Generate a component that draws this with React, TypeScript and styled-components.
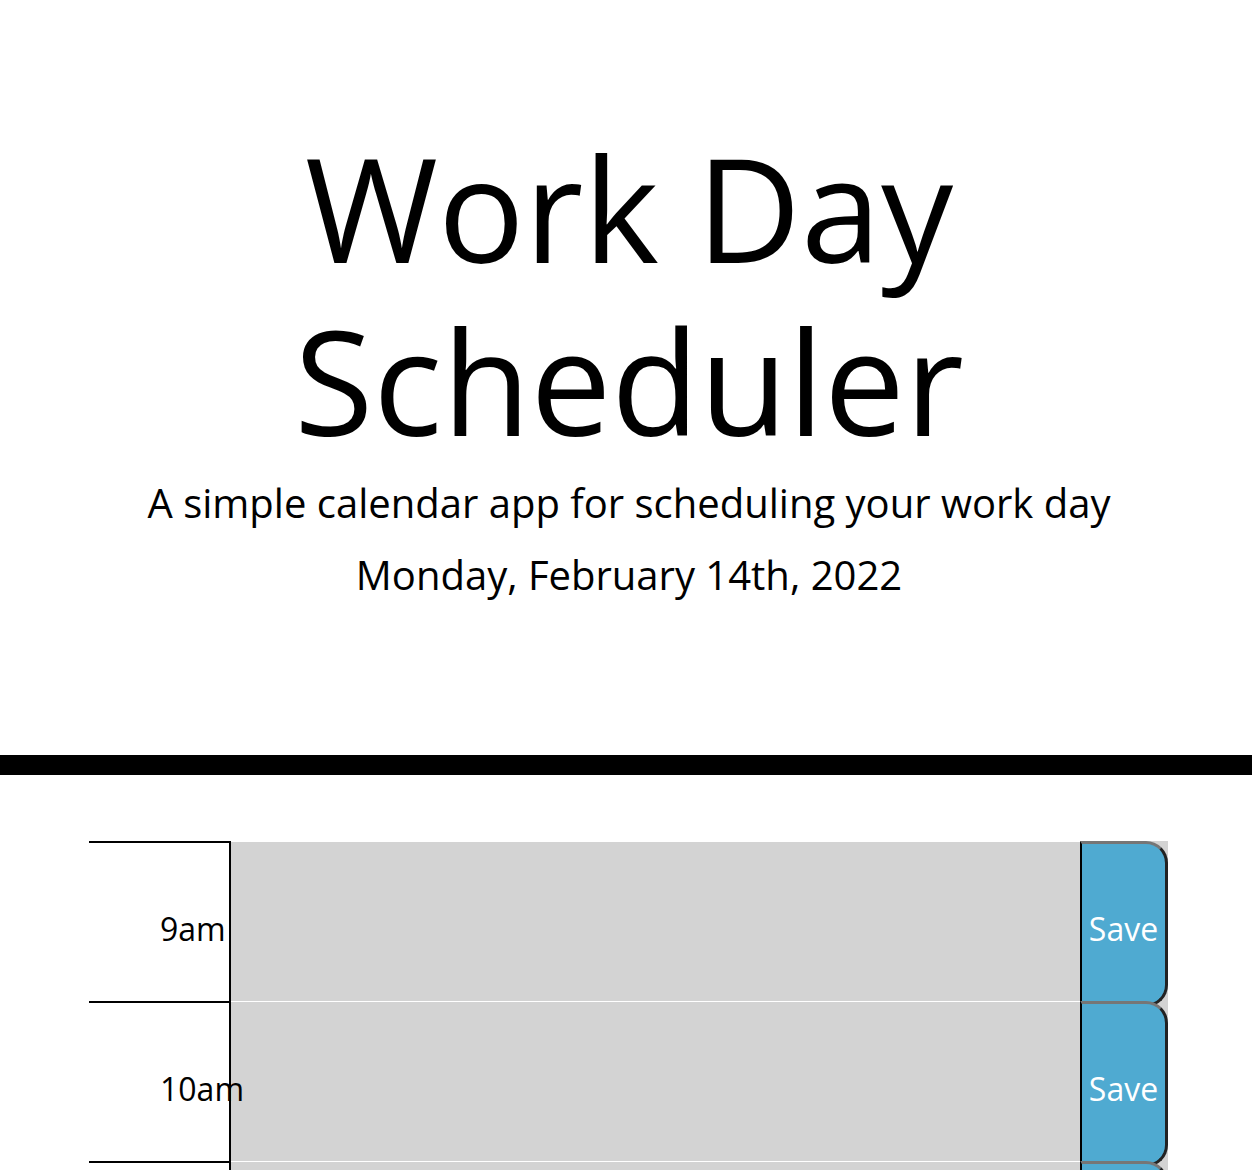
import styled, { createGlobalStyle } from "styled-components";

const GlobalStyle = createGlobalStyle`
  html, body {
    margin: 0;
    padding: 0;
    background: #ffffff;
  }
  body {
    font-family: "Open Sans", "Noto Sans", sans-serif;
    color: #000000;
  }
`;

const Header = styled.header`
  text-align: center;
  padding: 121px 0 156px 6px;
  border-bottom: 20px solid #000000;
`;

const Title = styled.h1`
  font-size: 144px;
  line-height: 1.2;
  font-weight: 400;
  margin: 0 0 12px 0;
`;

const Lead = styled.p`
  font-size: 40px;
  line-height: 48px;
  margin: 0 0 24px 0;
`;

const Today = styled.p`
  font-size: 40px;
  line-height: 48px;
  margin: 0;
`;

const Container = styled.main`
  margin: 66px 0 0 89px;
  width: 1079px;
`;

const Row = styled.div`
  display: flex;
  height: 160px;
  background: #d3d3d3;
`;

const Hour = styled.div`
  box-sizing: border-box;
  flex: 0 0 142px;
  width: 142px;
  min-width: 0;
  background: #ffffff;
  border-top: 2px solid #000000;
  border-right: 2px solid #000000;
  display: flex;
  align-items: center;
  padding: 14px 0 0 71px;
  font-size: 32px;
  white-space: nowrap;
  overflow: visible;
`;

const Description = styled.textarea`
  box-sizing: border-box;
  flex: 1;
  min-width: 0;
  height: 100%;
  margin: 0;
  padding: 0;
  border: none;
  border-top: 1px solid #ffffff;
  background: transparent;
  resize: none;
  outline: none;
  font-family: inherit;
  font-size: 24px;
`;

const SaveButton = styled.button`
  box-sizing: border-box;
  flex: 0 0 88px;
  align-self: flex-start;
  height: 166px;
  margin: 0;
  padding: 10px 0 0 0;
  background: #4faad1;
  color: #ffffff;
  font-family: inherit;
  font-size: 32px;
  border-style: solid;
  border-width: 3px 3px 3px 2px;
  border-color: #767676 #222222 #222222 #000000;
  border-radius: 0 22px 22px 0;
  cursor: pointer;
`;

const hours = ["9am", "10am", "11am", "12pm", "1pm", "2pm", "3pm", "4pm", "5pm"];

export default function App() {
  return (
    <>
      <GlobalStyle />
      <Header>
        <Title>Work Day Scheduler</Title>
        <Lead>A simple calendar app for scheduling your work day</Lead>
        <Today>Monday, February 14th, 2022</Today>
      </Header>
      <Container>
        {hours.map(h => (
          <Row key={h}>
            <Hour>{h}</Hour>
            <Description />
            <SaveButton>Save</SaveButton>
          </Row>
        ))}
      </Container>
    </>
  );
}
